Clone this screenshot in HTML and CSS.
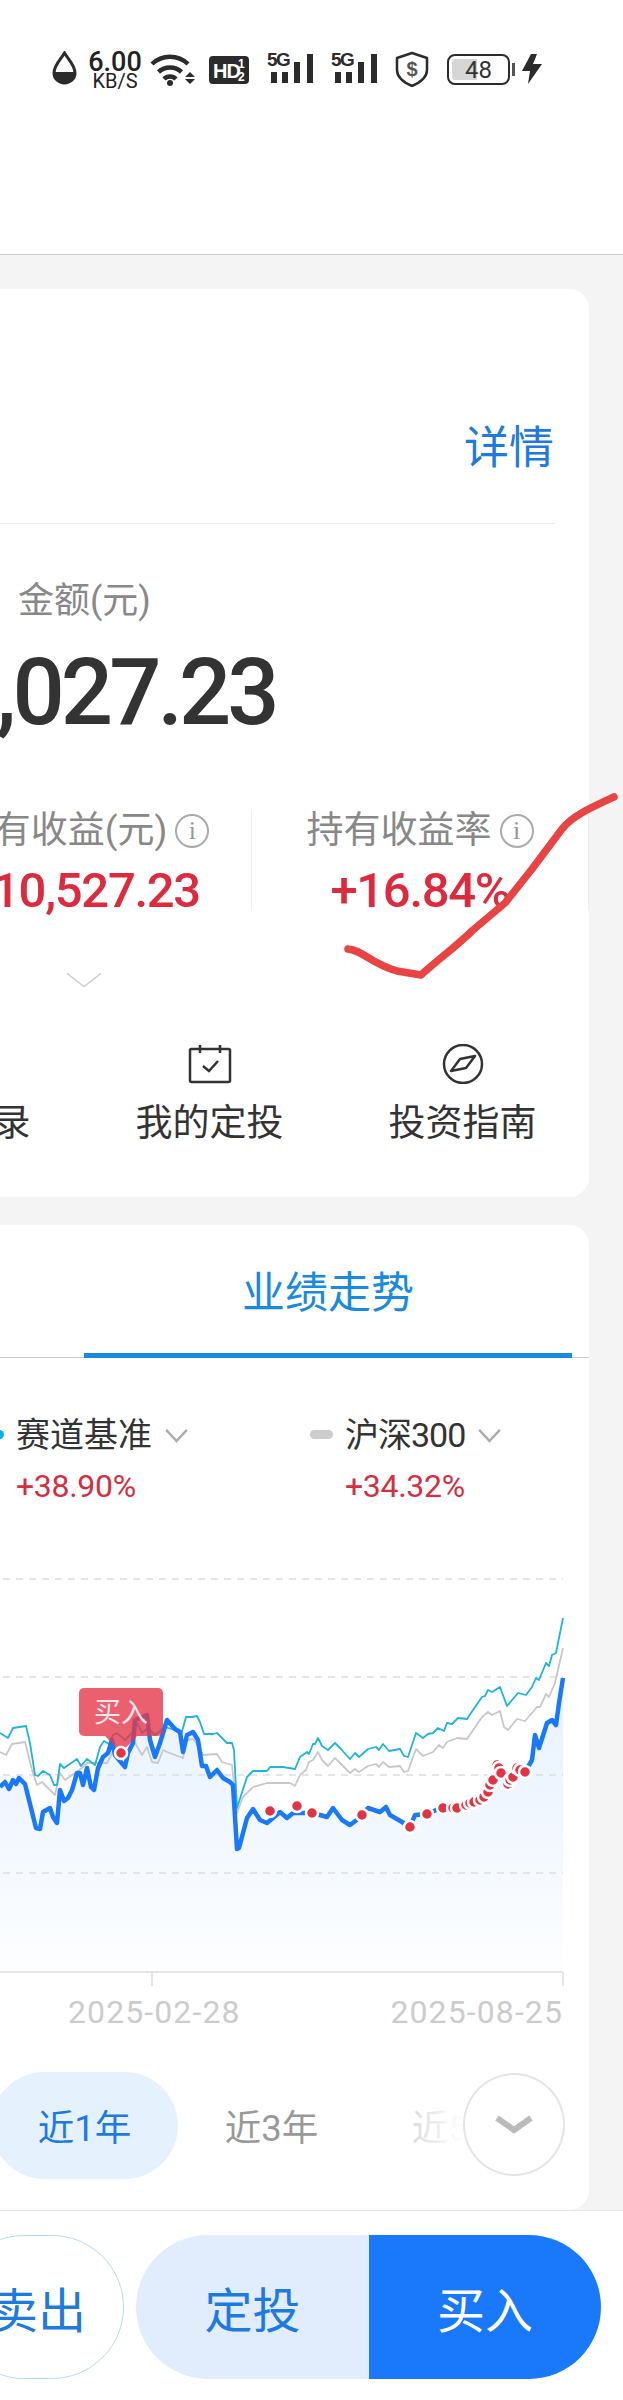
FILE: index.html
```html
<!doctype html>
<html lang="zh-CN">
  <head>
    <meta charset="UTF-8" />
    <title>持仓详情</title>
    <link rel="stylesheet" href="styles.css">
  </head>
  <body>
    <div class="page">
      <!-- Status bar -->
      <header class="statusbar">
        <svg class="st-drop" viewBox="0 0 25 34">
          <path d="M12.5 2 C9 8 2 14 2 22 C2 28 7 32 12.5 32 C18 32 23 28 23 22 C23 14 16 8 12.5 2 Z" fill="none" stroke="#2b2b2b" stroke-width="3" />
          <path d="M2 21 H23 C23 28 18 32 12.5 32 C7 32 2 28 2 21 Z" fill="#2b2b2b" />
        </svg>
        <div class="st-speed">
          <span class="st-speed-num">6.00</span>
          <span class="st-speed-unit">KB/S</span>
        </div>
        <svg class="st-wifi" viewBox="0 0 45 36">
          <g fill="none" stroke="#2b2b2b" stroke-width="4.5">
            <path d="M2 13 A 26 26 0 0 1 38 13" />
            <path d="M8.5 21 A 17 17 0 0 1 31.5 21" />
            <path d="M14 28 A 8.5 8.5 0 0 1 26 28" />
          </g>
          <circle cx="20" cy="32" r="3" fill="#2b2b2b" />
          <path d="M35 26 H45 L40 21 Z M35 28 H45 L40 33 Z" fill="#2b2b2b" />
        </svg>
        <svg class="st-hd" viewBox="0 0 40 28">
          <rect width="40" height="28" rx="4" fill="#2b2b2b" />
          <text class="hd-text" x="4" y="22">HD</text>
          <text class="hd-frac" x="29" y="12">1</text>
          <text class="hd-frac" x="29" y="25">2</text>
        </svg>
        <svg class="st-signal" viewBox="0 0 46 36">
          <text class="sig-text" x="0" y="15">5G</text>
          <path d="M4 21 H10 V32 H4 Z M15 21 H21 V32 H15 Z M27 11 H33 V32 H27 Z M40 3 H46 V32 H40 Z" fill="#2b2b2b" />
        </svg>
        <svg class="st-signal" viewBox="0 0 46 36">
          <text class="sig-text" x="0" y="15">5G</text>
          <path d="M4 21 H10 V32 H4 Z M15 21 H21 V32 H15 Z M27 11 H33 V32 H27 Z M40 3 H46 V32 H40 Z" fill="#2b2b2b" />
        </svg>
        <svg class="st-shield" viewBox="0 0 34 36">
          <path d="M17 2 L32 7 V19 C32 27 24 32 17 35 C10 32 2 27 2 19 V7 Z" fill="none" stroke="#2b2b2b" stroke-width="2.5" stroke-linejoin="round" />
          <text class="shield-text" x="17" y="25">$</text>
        </svg>
        <div class="st-battery">
          <div class="st-battery-body">
            <span class="st-battery-fill"></span>
            <span class="st-battery-num">48</span>
          </div>
          <span class="st-battery-nub"></span>
        </div>
        <svg class="st-bolt" viewBox="0 0 20 30">
          <path d="M9 0 L0 17 H8 L6 30 L20 10 H11 L15 0 Z" fill="#2b2b2b" />
        </svg>
      </header>

      <!-- Holding card -->
      <section class="card card-holding">
        <div class="card-head">
          <a class="detail-link">详情</a>
        </div>
        <div class="amount">
          <div class="amount-label">金额(元)</div>
          <div class="amount-value">,027.23</div>
        </div>
        <div class="stats">
          <div class="stat">
            <div class="stat-label">持有收益(元)<span class="info">i</span></div>
            <div class="stat-value">+10,527.23</div>
          </div>
          <div class="stat">
            <div class="stat-label">持有收益率<span class="info">i</span></div>
            <div class="stat-value">+16.84%</div>
          </div>
        </div>
        <div class="expand">
          <svg class="expand-icon" viewBox="0 0 38 16">
            <path d="M1 1 L19 15 L37 1" fill="none" stroke="#cfcfcf" stroke-width="1.5" />
          </svg>
        </div>
        <div class="actions">
          <div class="action">
            <div class="action-icon"></div>
            <span>交易记录</span>
          </div>
          <div class="action">
            <svg class="action-icon" viewBox="0 0 44 40">
              <rect x="2" y="5" width="40" height="33" rx="1.5" fill="none" stroke="#333" stroke-width="2.5" />
              <path d="M12 1 V9 M32 1 V9" stroke="#333" stroke-width="2.5" />
              <path d="M15 22 L21 27 L30 17" fill="none" stroke="#333" stroke-width="2.5" />
            </svg>
            <span>我的定投</span>
          </div>
          <div class="action">
            <svg class="action-icon" viewBox="0 0 44 40">
              <circle cx="22" cy="20" r="19" fill="none" stroke="#333" stroke-width="2.5" />
              <path d="M10 27 L19 15 L34 12 L25 24 Z" fill="none" stroke="#333" stroke-width="2.5" stroke-linejoin="round" />
            </svg>
            <span>投资指南</span>
          </div>
        </div>
      </section>

      <!-- Performance card -->
      <section class="card card-chart">
        <div class="tabs">
          <div class="tab">业绩走势</div>
        </div>

        <div class="legend">
          <div class="legend-item">
            <span class="legend-dash legend-dash-blue"></span>
            <div>
              <div class="legend-name">赛道基准<svg class="legend-arrow" viewBox="0 0 24 16"><path d="M1 2 L12 14 L23 2" fill="none" stroke="#aaa" stroke-width="2.5" /></svg></div>
              <div class="legend-value">+38.90%</div>
            </div>
          </div>
          <div class="legend-item">
            <span class="legend-dash"></span>
            <div>
              <div class="legend-name legend-name-tight">沪深300<svg class="legend-arrow" viewBox="0 0 24 16"><path d="M1 2 L12 14 L23 2" fill="none" stroke="#aaa" stroke-width="2.5" /></svg></div>
              <div class="legend-value">+34.32%</div>
            </div>
          </div>
        </div>

        <svg class="chart" viewBox="0 1560 589 430">
          <defs>
            <linearGradient id="areaFill" gradientUnits="userSpaceOnUse" x1="0" y1="1680" x2="0" y2="1972">
              <stop offset="0" stop-color="#e6f1ff" />
              <stop offset="1" stop-color="#fdfeff" />
            </linearGradient>
          </defs>

          <polygon fill="url(#areaFill)" points="0,1787 5,1782 9,1789 13,1780 16,1784 19,1778 25,1784 29,1800 36,1828 40,1829 43,1812 50,1808 53,1817 57,1823 60,1790 64,1801 68,1798 72,1790 77,1773 80,1773 83,1785 87,1768 91,1787 94,1790 98,1768 103,1757 108,1753 112,1740 115,1755 125,1767 128,1753 133,1743 135,1720 147,1715 150,1740 155,1757 160,1743 167,1720 175,1729 180,1732 183,1752 187,1735 193,1732 198,1740 202,1766 206,1766 210,1777 217,1770 223,1778 230,1782 233,1785 237,1849 239,1848 247,1818 253,1809 260,1820 267,1823 280,1812 287,1818 293,1813 312,1813 320,1815 327,1817 333,1808 342,1820 350,1825 358,1819 368,1808 380,1812 386,1807 390,1815 402,1822 410,1827 415,1815 427,1814 443,1807 467,1806 480,1800 488,1792 493,1780 498,1765 502,1773 508,1783 513,1777 518,1768 525,1772 532,1760 535,1735 539,1748 547,1723 552,1720 556,1725 559,1703 563,1678 563,1972 0,1972" />

          <g class="grid">
            <line x1="3" y1="1579" x2="563" y2="1579" />
            <line x1="3" y1="1677" x2="563" y2="1677" />
            <line x1="3" y1="1775" x2="563" y2="1775" />
            <line x1="3" y1="1873" x2="563" y2="1873" />
          </g>
          <line class="axis" x1="0" y1="1972" x2="563" y2="1972" />
          <line class="axis" x1="152" y1="1972" x2="152" y2="1986" />
          <line class="axis" x1="563" y1="1972" x2="563" y2="1986" />

          <polyline class="line-gray" points="0,1752 6,1755 12,1744 25,1742 32,1770 37,1785 42,1782 50,1790 55,1795 60,1773 65,1780 75,1773 83,1767 87,1763 97,1763 107,1763 115,1748 128,1753 135,1743 142,1755 147,1747 152,1762 158,1763 163,1750 167,1752 175,1755 183,1758 187,1740 193,1739 199,1747 203,1755 217,1754 222,1762 232,1765 237,1813 243,1797 253,1787 267,1783 290,1783 295,1786 300,1775 306,1770 309,1762 313,1760 318,1752 322,1760 328,1766 335,1758 350,1773 355,1769 359,1772 368,1766 376,1764 379,1767 383,1762 389,1767 400,1766 404,1772 408,1771 416,1749 423,1756 433,1752 439,1745 443,1748 447,1742 457,1738 467,1739 482,1717 488,1712 492,1715 500,1711 504,1727 508,1730 517,1719 525,1721 537,1707 540,1707 546,1694 549,1697 555,1683 563,1648" />
          <polyline class="line-cyan" points="0,1733 8,1738 13,1728 26,1726 30,1743 35,1775 38,1776 43,1771 50,1775 54,1785 57,1785 60,1764 64,1768 77,1759 81,1766 87,1759 95,1765 100,1747 104,1741 109,1744 113,1735 117,1733 125,1740 132,1733 137,1723 142,1733 148,1728 155,1735 165,1727 175,1730 181,1735 186,1717 192,1717 197,1716 200,1722 204,1734 213,1734 217,1733 227,1743 232,1743 234,1750 237,1808 247,1777 253,1771 267,1771 270,1767 283,1767 295,1769 300,1757 307,1752 309,1754 313,1744 315,1744 318,1738 322,1746 328,1750 335,1743 340,1748 350,1759 355,1753 359,1757 368,1749 376,1747 379,1750 383,1744 389,1751 400,1749 404,1756 408,1757 416,1733 423,1738 428,1734 433,1733 438,1728 444,1731 447,1723 452,1724 458,1718 467,1719 473,1710 482,1697 485,1696 488,1690 492,1692 500,1687 507,1706 518,1693 526,1695 532,1687 536,1678 539,1680 546,1663 549,1666 552,1655 556,1653 563,1618" />
          <polyline class="line-blue" points="0,1787 5,1782 9,1789 13,1780 16,1784 19,1778 25,1784 29,1800 36,1828 40,1829 43,1812 50,1808 53,1817 57,1823 60,1790 64,1801 68,1798 72,1790 77,1773 80,1773 83,1785 87,1768 91,1787 94,1790 98,1768 103,1757 108,1753 112,1740 115,1755 125,1767 128,1753 133,1743 135,1720 147,1715 150,1740 155,1757 160,1743 167,1720 175,1729 180,1732 183,1752 187,1735 193,1732 198,1740 202,1766 206,1766 210,1777 217,1770 223,1778 230,1782 233,1785 237,1849 239,1848 247,1818 253,1809 260,1820 267,1823 280,1812 287,1818 293,1813 312,1813 320,1815 327,1817 333,1808 342,1820 350,1825 358,1819 368,1808 380,1812 386,1807 390,1815 402,1822 410,1827 415,1815 427,1814 443,1807 467,1806 480,1800 488,1792 493,1780 498,1765 502,1773 508,1783 513,1777 518,1768 525,1772 532,1760 535,1735 539,1748 547,1723 552,1720 556,1725 559,1703 563,1678" />

          <!-- Buy tag -->
          <g class="buy-tag">
            <rect x="79" y="1688" width="84" height="48" rx="5" />
            <polygon points="105,1736 137,1736 121,1753" />
          </g>
          <text class="buy-text" x="121" y="1722">买入</text>

          <!-- Buy points -->
          <g class="dots">
            <circle cx="121" cy="1753" r="6" />
            <circle cx="270" cy="1811" r="6" />
            <circle cx="297" cy="1806" r="6" />
            <circle cx="312" cy="1813" r="6" />
            <circle cx="362" cy="1815" r="6" />
            <circle cx="410" cy="1827" r="6" />
            <circle cx="427" cy="1814" r="6" />
            <circle cx="443" cy="1808" r="6" />
            <circle cx="453" cy="1808" r="6" />
            <circle cx="457" cy="1808" r="6" />
            <circle cx="466" cy="1805" r="6" />
            <circle cx="470" cy="1803" r="6" />
            <circle cx="474" cy="1802" r="6" />
            <circle cx="480" cy="1800" r="6" />
            <circle cx="484" cy="1797" r="6" />
            <circle cx="488" cy="1792" r="6" />
            <circle cx="490" cy="1785" r="6" />
            <circle cx="493" cy="1780" r="6" />
            <circle cx="497" cy="1765" r="6" />
            <circle cx="499" cy="1768" r="6" />
            <circle cx="501" cy="1773" r="6" />
            <circle cx="508" cy="1784" r="6" />
            <circle cx="510" cy="1780" r="6" />
            <circle cx="513" cy="1777" r="6" />
            <circle cx="517" cy="1768" r="6" />
            <circle cx="520" cy="1770" r="6" />
            <circle cx="525" cy="1772" r="6" />
          </g>
        </svg>

        <div class="dates">
          <span>2025-02-28</span>
          <span>2025-08-25</span>
        </div>

        <div class="ranges">
          <div class="range range-active">近1年</div>
          <div class="range">近3年</div>
          <div class="range range-faded">近5年</div>
          <div class="range-fade"></div>
          <div class="range-more">
            <svg class="range-more-icon" viewBox="0 0 38 20">
              <path d="M2 3 L19 15 L36 3" fill="none" stroke="#bbb" stroke-width="6" />
            </svg>
          </div>
        </div>
      </section>

      <!-- Bottom buttons -->
      <footer class="footer">
        <button class="btn btn-sell">卖出</button>
        <button class="btn btn-plan">定投</button>
        <button class="btn btn-buy">买入</button>
      </footer>

      <!-- Red tick drawn over the screenshot -->
      <svg class="scribble" viewBox="340 790 283 195">
        <path d="M348 949 C362 950 372 964 397 971 L421 975 C440 958 458 945 473 930 L505 903 L532 869 L562 829 C572 816 590 808 614 797" fill="none" stroke="#e94444" stroke-width="7.5" stroke-linecap="round" stroke-linejoin="round" />
      </svg>
    </div>
  </body>
</html>
```

FILE: styles.css
```css
/* Base */
* {
  box-sizing: border-box;
}

body {
  margin: 0;
  font-family: Roboto, "Noto Sans CJK SC", sans-serif;
  color: #333;
}

.page {
  position: relative;
  width: 623px;
  height: 2400px;
  overflow: hidden;
  background-color: #f4f4f4;
}

/* Status bar */
.statusbar {
  display: flex;
  align-items: flex-start;
  height: 255px;
  padding: 51px 0 0 52px;
  background-color: #fff;
  border-bottom: 1px solid #ccc;
}

.st-drop {
  width: 25px;
  height: 34px;
}

.st-speed {
  display: flex;
  flex-direction: column;
  align-items: center;
  width: 52px;
  margin-left: 12px;
  color: #222;
}

.st-speed-num {
  font-size: 27px;
  font-weight: 500;
  line-height: 23px;
}

.st-speed-unit {
  font-size: 20px;
  line-height: 15px;
}

.st-wifi {
  width: 45px;
  height: 36px;
  margin-left: 9px;
}

.st-hd {
  width: 40px;
  height: 28px;
  margin: 5px 0 0 14px;
}

.hd-text {
  font-family: "Liberation Sans", sans-serif;
  font-size: 20px;
  font-weight: 700;
  fill: #fff;
  letter-spacing: -1px;
}

.hd-frac {
  font-family: "Liberation Sans", sans-serif;
  font-size: 12px;
  font-weight: 700;
  fill: #fff;
}

.st-signal {
  width: 46px;
  height: 36px;
  margin-left: 18px;
}

.sig-text {
  font-family: "Liberation Sans", sans-serif;
  font-size: 19px;
  font-weight: 700;
  fill: #2b2b2b;
  letter-spacing: -1.5px;
}

.st-shield {
  width: 34px;
  height: 36px;
  margin-left: 18px;
}

.shield-text {
  font-family: "Liberation Sans", sans-serif;
  font-size: 20px;
  font-weight: 700;
  fill: #555;
  text-anchor: middle;
}

.st-battery {
  display: flex;
  align-items: center;
  margin: 3px 0 0 18px;
}

.st-battery-body {
  position: relative;
  display: flex;
  align-items: center;
  justify-content: center;
  width: 63px;
  height: 31px;
  border: 2.5px solid #2b2b2b;
  border-radius: 8px;
}

.st-battery-fill {
  position: absolute;
  left: 3px;
  top: 3px;
  bottom: 3px;
  width: 25px;
  background-color: #d6d6d6;
  border-radius: 3px 0 0 3px;
}

.st-battery-num {
  position: relative;
  font-size: 24px;
  line-height: 1;
  color: #333;
}

.st-battery-nub {
  width: 3px;
  height: 13px;
  margin-left: 2px;
  background-color: #555;
}

.st-bolt {
  width: 20px;
  height: 30px;
  margin: 3px 0 0 7px;
}

/* Cards */
.card {
  width: 689px;
  margin-left: -100px;
  background-color: #fff;
  border-radius: 20px;
}

.card-holding {
  height: 908px;
  margin-top: 34px;
}

.card-chart {
  height: 985px;
  margin-top: 28px;
}

.card-head {
  display: flex;
  justify-content: flex-end;
  align-items: flex-end;
  height: 235px;
  margin-right: 34px;
  padding-bottom: 49px;
  border-bottom: 1px solid #eee;
}

.detail-link {
  margin-right: 1px;
  font-size: 45px;
  line-height: 50px;
  color: #1f7ae0;
}

/* Amount */
.amount {
  padding-top: 52px;
}

.amount-label {
  margin-left: 118px;
  font-size: 36px;
  line-height: 50px;
  color: #888;
}

.amount-value {
  margin: 17px 0 0 96px;
  font-size: 92px;
  font-weight: 500;
  line-height: 100px;
  letter-spacing: -4px;
  color: #333;
}

/* Stats */
.stats {
  display: flex;
  justify-content: flex-end;
  margin-top: 66px;
}

.stat {
  flex: none;
  width: 337px;
  height: 102px;
  padding-top: 2px;
  border-right: 1px solid #eee;
  text-align: center;
}

.stat-label {
  display: flex;
  align-items: center;
  justify-content: center;
  font-size: 37px;
  line-height: 40px;
  color: #888;
}

.info {
  display: flex;
  align-items: center;
  justify-content: center;
  width: 34px;
  height: 34px;
  margin-left: 8px;
  border: 2.5px solid #aaa;
  border-radius: 50%;
  font-family: "Liberation Serif", serif;
  font-size: 26px;
  color: #999;
}

.stat-value {
  margin-top: 15px;
  font-size: 49px;
  font-weight: 500;
  line-height: 50px;
  letter-spacing: -1.3px;
  color: #dc2a3f;
}

.expand {
  display: flex;
  justify-content: flex-start;
  margin: 61px 0 0 166px;
}

.expand-icon {
  width: 36px;
  height: 16px;
}

/* Actions */
.actions {
  display: flex;
  justify-content: flex-end;
  margin-top: 56px;
}

.action {
  flex: none;
  display: flex;
  flex-direction: column;
  align-items: center;
  width: 253px;
  font-size: 37px;
  line-height: 44px;
  color: #333;
}

.action-icon {
  width: 44px;
  height: 40px;
  margin-bottom: 18px;
}

/* Tabs */
.tabs {
  height: 133px;
  padding-left: 184px;
  border-bottom: 1px solid #ccc;
}

.tab {
  display: flex;
  align-items: center;
  justify-content: center;
  width: 488px;
  height: 133px;
  border-bottom: 5px solid #1a8ae0;
  font-size: 43px;
  color: #1a8ae0;
}

/* Legend */
.legend {
  display: flex;
  padding: 56px 0 0 81px;
}

.legend-item {
  flex: none;
  display: flex;
  gap: 12px;
  width: 329px;
}

.legend-dash {
  flex: none;
  width: 23px;
  height: 9px;
  margin-top: 16px;
  background-color: #ccc;
  border-radius: 5px;
}

.legend-dash-blue {
  background-color: #00b0f0;
}

.legend-name {
  display: flex;
  align-items: center;
  font-size: 34px;
  line-height: 42px;
  color: #333;
}

.legend-name-tight {
  letter-spacing: -1px;
}

.legend-arrow {
  width: 23px;
  height: 15px;
  margin-left: 13px;
}

.legend-value {
  margin-top: 10px;
  font-size: 32px;
  line-height: 40px;
  letter-spacing: -0.3px;
  color: #d32f42;
}

/* Chart */
.chart {
  display: block;
  width: 589px;
  height: 430px;
  margin: 54px 0 0 100px;
}

.grid line {
  stroke: #ddd;
  stroke-width: 1.5;
  stroke-dasharray: 7 6;
}

.axis {
  stroke: #ddd;
  stroke-width: 1.5;
}

.line-blue {
  fill: none;
  stroke: #1a78fb;
  stroke-width: 4.5;
  stroke-linejoin: round;
}

.line-cyan {
  fill: none;
  stroke: #1fb4d8;
  stroke-width: 1.8;
  stroke-linejoin: round;
}

.line-gray {
  fill: none;
  stroke: #c8c8c8;
  stroke-width: 1.8;
  stroke-linejoin: round;
}

.buy-tag {
  fill: #e5394c;
  opacity: 0.8;
}

.buy-text {
  font-family: "Noto Sans CJK SC", sans-serif;
  font-size: 27px;
  fill: #fff;
  opacity: 0.85;
  text-anchor: middle;
}

.dots circle {
  fill: #e23345;
  stroke: #fff;
  stroke-width: 2.5;
}

.dates {
  display: flex;
  justify-content: space-between;
  margin: 4px 0 0 168px;
  padding-right: 26px;
  font-size: 32px;
  line-height: 36px;
  letter-spacing: 1.1px;
  color: #ccc;
}

/* Range selector */
.ranges {
  position: relative;
  display: flex;
  height: 107px;
  margin-top: 42px;
  padding-left: 91px;
}

.range {
  flex: none;
  display: flex;
  align-items: center;
  justify-content: center;
  width: 187px;
  height: 107px;
  border-radius: 54px;
  font-size: 36.5px;
  color: #999;
}

.range-active {
  background-color: #e6f1fe;
  color: #1f7ae0;
}

.range-faded {
  color: #bbb;
}

.range-fade {
  position: absolute;
  top: 0;
  right: 0;
  width: 196px;
  height: 107px;
  background: linear-gradient(to right, rgba(255, 255, 255, 0.3), #fff 36%);
}

.range-more {
  position: absolute;
  top: 1px;
  right: 24px;
  display: flex;
  align-items: center;
  justify-content: center;
  width: 102px;
  height: 103px;
  background-color: #fff;
  border: 2.5px solid #e5e5e5;
  border-radius: 50%;
}

.range-more-icon {
  width: 38px;
  height: 20px;
}

/* Footer */
.footer {
  display: flex;
  height: 190px;
  margin-left: -48px;
  width: 671px;
  padding-top: 24px;
  background-color: #fff;
  border-top: 1px solid #e5e5e5;
}

.btn {
  height: 144px;
  padding: 0;
  border: none;
  font-family: "Noto Sans CJK SC", sans-serif;
  font-size: 48px;
}

.btn-sell {
  width: 172px;
  margin-right: 12px;
  background-color: #fff;
  border: 1px solid #b8dbf0;
  border-radius: 72px;
  color: #1f7ae0;
}

.btn-plan {
  width: 233px;
  background-color: #e1edfc;
  border-radius: 72px 0 0 72px;
  color: #1f7ae0;
}

.btn-buy {
  width: 232px;
  background-color: #1a78fb;
  border-radius: 0 72px 72px 0;
  color: #fff;
}

/* Hand-drawn tick */
.scribble {
  position: absolute;
  left: 340px;
  top: 790px;
  width: 283px;
  height: 195px;
}
```
